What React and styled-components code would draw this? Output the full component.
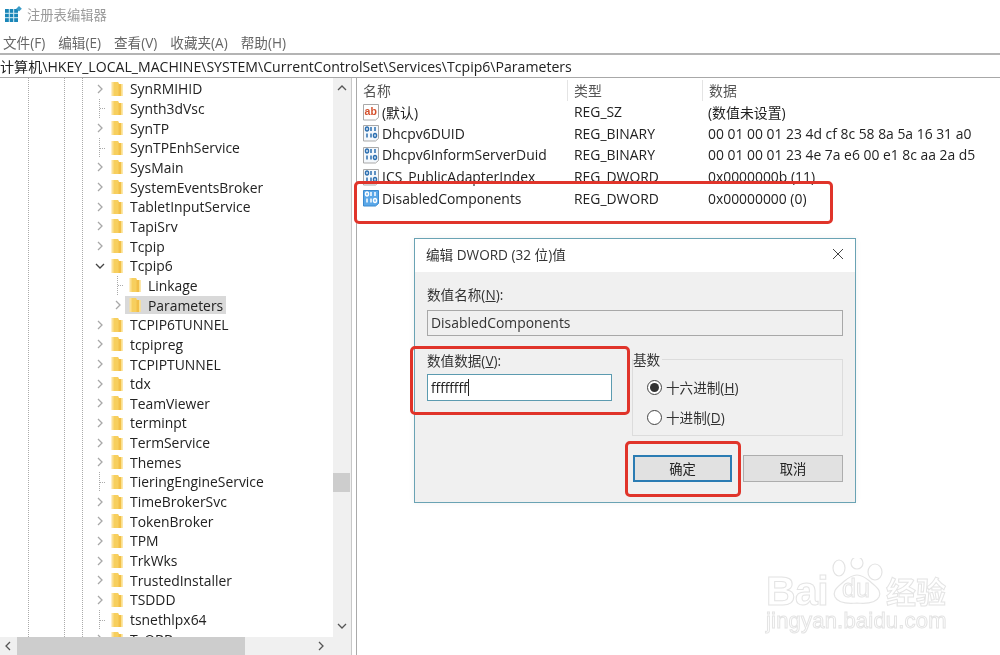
import React from "react";
import styled, { createGlobalStyle } from "styled-components";

const Global = createGlobalStyle`
  html, body { margin: 0; padding: 0; background: #fff; }
  #root { width: 1000px; height: 655px; overflow: hidden; }
`;
const FONT = `"Open Sans", "Noto Sans", "Noto Sans CJK SC", sans-serif`;

const Page = styled.div`
  position: relative; width: 1000px; height: 655px; overflow: hidden;
  background: #fff; display: flex; flex-direction: column;
  font-family: ${FONT}; font-size: 13.9px; color: #222;
  filter: blur(0.3px);
`;
const TitleBar = styled.div`
  height: 29px; padding-bottom: 1px; display: flex; align-items: center; gap: 5px; padding-left: 4px;
  color: #9a9a9a; font-size: 13.3px; flex: none;
`;
const MenuBar = styled.div`
  height: 23px; display: flex; align-items: center; gap: 13px; padding-left: 3px;
  color: #666; font-size: 13.6px; flex: none;
`;
const AddressBar = styled.div`
  height: 22px; display: flex; align-items: center; flex: none; white-space: nowrap;
  border-top: 2px solid #b4b4b4; border-bottom: 1px solid #a8a8a8;
  font-size: 14.1px; color: #222; overflow: hidden;
`;
const Body = styled.div`flex: 1; display: flex; min-height: 0;`;
const TreePane = styled.div`
  width: 351px; flex: none; display: flex; flex-direction: column; border-right: 1px solid #c8c8c8;
`;
const TreeMain = styled.div`flex: 1; display: flex; min-height: 0;`;
const Tree = styled.div`
  flex: 1; overflow: hidden; padding-top: 1px;
  background-image:
    repeating-linear-gradient(#aaa 0 1px, transparent 1px 2px),
    repeating-linear-gradient(#aaa 0 1px, transparent 1px 2px),
    repeating-linear-gradient(#aaa 0 1px, transparent 1px 2px);
  background-size: 1px 100%;
  background-repeat: no-repeat;
  background-position: 28px 0, 64px 0, 82px 0;
`;
const Row = styled.div`
  position: relative; height: 19.67px; display: flex; align-items: center;
  padding-left: ${p => 93 + p.$level * 18}px; white-space: nowrap;
`;
const Expander = styled.span`
  position: relative; width: 13.5px; height: 100%; flex: none; display: flex;
  align-items: center; justify-content: center;
  ${p => p.$leaf && `
    &::before { content: ""; position: absolute; left: 6px; top: 0; bottom: 0; width: 1px;
      background: repeating-linear-gradient(#aaa 0 1px, transparent 1px 2px); }
    &::after { content: ""; position: absolute; left: 7px; top: 50%; width: 6px; height: 1px;
      background: repeating-linear-gradient(90deg, #aaa 0 1px, transparent 1px 2px); }
  `}
`;
const Label = styled.span`
  display: flex; align-items: center; gap: 7.5px; height: 18px; padding: 0 3px 0 4px;
  background: ${p => (p.$selected ? "#d9d9d9" : "transparent")};
`;
const VScroll = styled.div`
  width: 18px; flex: none; background: #f0f0f0; display: flex; flex-direction: column;
  align-items: center; justify-content: space-between; padding: 5px 0 6px;
  position: relative;
`;
const VThumb = styled.div`
  position: absolute; left: 0; right: 1px; top: 395px; height: 19px; background: #cdcdcd;
`;
const HScroll = styled.div`
  height: 18px; flex: none; background: #f0f0f0; display: flex; align-items: center;
  padding: 0 7px 0 3px; width: 333px; box-sizing: border-box;
  box-shadow: 18px 0 0 #f0f0f0;
`;
const HThumb = styled.div`
  height: 18px; width: 228px; margin-left: 4px; background: #cdcdcd;
`;
const HSpace = styled.div`flex: 1;`;
const ListPane = styled.div`
  flex: 1; margin-left: 4px; border-left: 1px solid #aaa; padding-top: 2px; overflow: hidden;
`;
const ListHead = styled.div`
  display: grid; grid-template-columns: 211px 135px 1fr; height: 21px; align-items: center; color: #555;
`;
const HeadCell = styled.div`
  padding-left: 6px; height: 21px; line-height: 21px; box-sizing: border-box;
  border-right: 1px solid #e4e4e4;
  &:last-child { border-right: 0; }
`;
const ListRow = styled.div`
  display: grid; grid-template-columns: 212px 134px 1fr; height: 21.6px; align-items: center; white-space: nowrap;
`;
const NameCell = styled.div`display: flex; align-items: center; gap: 2px; padding-left: 5px;`;
const TypeCell = styled.div`padding-left: 5px;`;
const DataCell = styled.div`padding-left: 5px;`;

const Dialog = styled.div`
  position: absolute; left: 414px; top: 238px; width: 442px; height: 265px; box-sizing: border-box;
  background: #f0f0f0; border: 1px solid #6aa3b4; display: flex; flex-direction: column;
  box-shadow: 0 0 6px rgba(0,0,0,.06);
`;
const DialogTitle = styled.div`
  height: 33px; padding-bottom: 3px; box-sizing: border-box; flex: none; background: #fff; display: flex; align-items: center;
  justify-content: space-between; padding-left: 11px; padding-right: 11px; color: #333; font-size: 13.6px;
`;
const DialogBody = styled.div`display: flex; flex-direction: column; padding: 13px 12px 0;`;
const FieldLabel = styled.div`height: 20px; line-height: 20px; color: #333; font-size: 13.6px;`;
const NameInput = styled.div`
  margin-top: 5px; height: 26px; box-sizing: border-box; border: 1px solid #a8a8a8; background: #f0f0f0;
  display: flex; align-items: center; padding-left: 3px; padding-bottom: 2px; font-size: 13.9px; color: #333;
`;
const Columns = styled.div`display: flex; gap: 20px; margin-top: 15px;`;
const ValueCol = styled.div`width: 185px; flex: none;`;
const ValueInput = styled.div`
  margin-top: 3px; height: 27px; box-sizing: border-box; border: 1px solid #5c9bb0; background: #fff;
  display: flex; align-items: center; padding-left: 3px; font-size: 13.6px; color: #222;
`;
const Caret = styled.span`display: inline-block; width: 1px; height: 17px; background: #222;`;
const GroupBox = styled.div`
  position: relative; width: 211px; height: 77px; box-sizing: border-box; margin-top: 8px;
  border: 1px solid #dcdcdc; display: flex; flex-direction: column; gap: 12px; padding: 18px 0 0 14px;
`;
const Legend = styled.span`
  position: absolute; left: 0; top: -9px; background: #f0f0f0; padding-right: 2px; font-size: 13.6px; color: #333; line-height: 17px;
`;
const RadioRow = styled.div`display: flex; align-items: center; gap: 4px; height: 18px; font-size: 13.6px; color: #333;`;
const Radio = styled.span`
  width: 13px; height: 13px; border-radius: 50%; border: 1px solid #444; background: #fff; flex: none;
  display: flex; align-items: center; justify-content: center;
  &::after { content: ""; width: 9px; height: 9px; border-radius: 50%; background: ${p => (p.$on ? "#333" : "transparent")}; }
`;
const Buttons = styled.div`display: flex; justify-content: flex-end; gap: 11px; margin-top: 19px;`;
const Button = styled.div`
  width: ${p => p.$w}px; height: 27px; box-sizing: border-box; background: #e1e1e1;
  border: ${p => (p.$primary ? "2px solid #2b7cb3" : "1px solid #adadad")};
  display: flex; align-items: center; justify-content: center; font-size: 13.3px; color: #222;
`;
const RedBox = styled.div`
  position: absolute; left: ${p => p.$x}px; top: ${p => p.$y}px; width: ${p => p.$w}px; height: ${p => p.$h}px;
  box-sizing: border-box; border: 3px solid #e0342a; border-radius: 5px; pointer-events: none;
`;
const Watermark = styled.div`
  position: absolute; left: 766px; top: 558px; width: 190px; height: 80px; font-family: "Liberation Sans", sans-serif;
  color: #fff; -webkit-text-stroke: 1px #e4e4e4;
`;
const WmTop = styled.div`display: flex; align-items: flex-end; height: 50px;`;
const WmBai = styled.span`font-size: 41px; font-weight: 700; line-height: 32px; letter-spacing: -0.6px; margin-bottom: 1px;`;
const WmCn = styled.span`
  font-family: "Noto Sans CJK SC", sans-serif; font-size: 30px; font-weight: 700; line-height: 30px; margin-bottom: 3px;
`;
const WmUrl = styled.div`font-size: 22px; line-height: 26px; letter-spacing: 0.2px; white-space: nowrap;`;

const Chevron = ({ dir = "right", color = "#a8a8a8", size = 10 }) => {
  const d = { right: "M3 1l4 4-4 4", left: "M7 1L3 5l4 4", up: "M1 7l4-4 4 4", down: "M1 3l4 4 4-4" }[dir];
  return (
    <svg width={size} height={size} viewBox="0 0 10 10" fill="none" stroke={color} strokeWidth="1.3">
      <path d={d} />
    </svg>
  );
};
const Folder = () => (
  <svg width="12" height="16" viewBox="0 0 12 16">
    <path d="M0.500 1h6.500l1 2h3.500v12H0.500z" fill="#fbe096" />
    <path d="M2.500 1h4.500l1 2v12H2.500z" fill="#f7cf5e" />
    <path d="M7.500 3h2.500v12H7.500z" fill="#f2bf48" />
    <path d="M10 3h1.500v12H10z" fill="#fbe08c" />
  </svg>
);
const AppIcon = () => (
  <svg width="18" height="18" viewBox="0 0 18 18">
    <rect x="1" y="3" width="13" height="13" fill="#1a86b8" />
    <path d="M5.300 3v13M9.700 3v13M1 7.300h13M1 11.700h13" stroke="#d8eef6" strokeWidth="1" />
    <path d="M15 0l2.800 2.800L15 5.600l-2.800-2.800z" fill="#3a9cc8" />
  </svg>
);
const AbIcon = () => (
  <svg width="18" height="18" viewBox="0 0 18 18">
    <path d="M1.500 1.500h15v13l-3 2.500H1.500z" fill="#fff" stroke="#a9a9a9" />
    <text x="2.600" y="12" fontFamily="Liberation Sans" fontSize="10.500" fontWeight="700" fill="#d4502c">ab</text>
  </svg>
);
const BinIcon = ({ selected }) => (
  <svg width="18" height="18" viewBox="0 0 18 18">
    <path d="M1.500 1.500h15v13l-3 2.500H1.500z" fill={selected ? "#5aa7e8" : "#f4f8fc"} stroke={selected ? "#3a8ad0" : "#a9a9a9"} />
    <g fill="none" stroke={selected ? "#fff" : "#2c6fb0"} strokeWidth="1.500">
      <ellipse cx="5" cy="5" rx="1.500" ry="2" />
      <path d="M9 3v4M13 3v4M5 9.500v4M9 9.500v4" />
      <ellipse cx="13" cy="11.500" rx="1.500" ry="2" />
    </g>
  </svg>
);
const Close = () => (
  <svg width="12" height="12" viewBox="0 0 12 12" stroke="#444" strokeWidth="1" fill="none">
    <path d="M1 1l10 10M11 1L1 11" />
  </svg>
);
const Paw = () => (
  <svg width="58" height="50" viewBox="0 0 58 50" fill="#fff" stroke="#e4e4e4" strokeWidth="1.200">
    <ellipse cx="11" cy="10" rx="6" ry="8" />
    <ellipse cx="29" cy="5" rx="6" ry="6" />
    <ellipse cx="47" cy="14" rx="7" ry="8" />
    <path d="M29 17c7 0 11 5 16 9 6 5 8 8 6 13-3 6-11 7-22 6-11 1-19 0-22-6-2-5 0-8 6-13 5-4 9-9 16-9z" />
    <text x="14" y="39" fontFamily="Liberation Sans" fontSize="25" fill="#fff" stroke="#e4e4e4" strokeWidth="1">du</text>
  </svg>
);

const names = [
  ["SynRMIHID"], ["Synth3dVsc", "leaf"], ["SynTP"], ["SynTPEnhService", "leaf"], ["SysMain"],
  ["SystemEventsBroker"], ["TabletInputService"], ["TapiSrv"], ["Tcpip"], ["Tcpip6", "open"],
  ["Linkage", "leaf", 1], ["Parameters", "sel", 1], ["TCPIP6TUNNEL"], ["tcpipreg"], ["TCPIPTUNNEL"],
  ["tdx"], ["TeamViewer"], ["terminpt"], ["TermService"], ["Themes"], ["TieringEngineService", "leaf"],
  ["TimeBrokerSvc"], ["TokenBroker"], ["TPM"], ["TrkWks"], ["TrustedInstaller"], ["TSDDD"],
  ["tsnethlpx64", "leaf"], ["TsQBB"],
];
const values = [
  ["ab", "(默认)", "REG_SZ", "(数值未设置)"],
  ["bin", "Dhcpv6DUID", "REG_BINARY", "00 01 00 01 23 4d cf 8c 58 8a 5a 16 31 a0"],
  ["bin", "Dhcpv6InformServerDuid", "REG_BINARY", "00 01 00 01 23 4e 7a e6 00 e1 8c aa 2a d5"],
  ["bin", "ICS_PublicAdapterIndex", "REG_DWORD", "0x0000000b (11)"],
  ["sel", "DisabledComponents", "REG_DWORD", "0x00000000 (0)"],
];

export default function App() {
  return (
    <Page>
      <Global />
      <TitleBar><AppIcon />注册表编辑器</TitleBar>
      <MenuBar>
        <span>文件(F)</span><span>编辑(E)</span><span>查看(V)</span><span>收藏夹(A)</span><span>帮助(H)</span>
      </MenuBar>
      <AddressBar>计算机\HKEY_LOCAL_MACHINE\SYSTEM\CurrentControlSet\Services\Tcpip6\Parameters</AddressBar>
      <Body>
        <TreePane>
          <TreeMain>
            <Tree>
              {names.map(([n, kind, level = 0]) => (
                <Row key={n} $level={level}>
                  <Expander $leaf={kind === "leaf"}>
                    {kind === "open" ? <Chevron dir="down" color="#444" /> : kind === "leaf" ? null : <Chevron />}
                  </Expander>
                  <Label $selected={kind === "sel"}><Folder />{n}</Label>
                </Row>
              ))}
            </Tree>
            <VScroll>
              <Chevron dir="up" color="#555" />
              <VThumb />
              <Chevron dir="down" color="#555" />
            </VScroll>
          </TreeMain>
          <HScroll>
            <Chevron dir="left" color="#555" />
            <HThumb />
            <HSpace />
            <Chevron dir="right" color="#555" />
          </HScroll>
        </TreePane>
        <ListPane>
          <ListHead>
            <HeadCell>名称</HeadCell><HeadCell>类型</HeadCell><HeadCell>数据</HeadCell>
          </ListHead>
          {values.map(([icon, n, t, d]) => (
            <ListRow key={n}>
              <NameCell>
                {icon === "ab" ? <AbIcon /> : <BinIcon selected={icon === "sel"} />}
                {n}
              </NameCell>
              <TypeCell>{t}</TypeCell>
              <DataCell>{d}</DataCell>
            </ListRow>
          ))}
        </ListPane>
      </Body>

      <Dialog>
        <DialogTitle>编辑 DWORD (32 位)值<Close /></DialogTitle>
        <DialogBody>
          <FieldLabel>数值名称(<u>N</u>):</FieldLabel>
          <NameInput>DisabledComponents</NameInput>
          <Columns>
            <ValueCol>
              <FieldLabel>数值数据(<u>V</u>):</FieldLabel>
              <ValueInput>ffffffff<Caret /></ValueInput>
            </ValueCol>
            <GroupBox>
              <Legend>基数</Legend>
              <RadioRow><Radio $on /><span>十六进制(<u>H</u>)</span></RadioRow>
              <RadioRow><Radio /><span>十进制(<u>D</u>)</span></RadioRow>
            </GroupBox>
          </Columns>
          <Buttons>
            <Button $primary $w={99}>确定</Button>
            <Button $w={100}>取消</Button>
          </Buttons>
        </DialogBody>
      </Dialog>

      <RedBox $x={354} $y={181} $w={479} $h={43} />
      <RedBox $x={410} $y={346} $w={220} $h={69} />
      <RedBox $x={625} $y={441} $w={116} $h={56} />

      <Watermark>
        <WmTop><WmBai>Bai</WmBai><Paw /><WmCn>经验</WmCn></WmTop>
        <WmUrl>jingyan.baidu.com</WmUrl>
      </Watermark>
    </Page>
  );
}
